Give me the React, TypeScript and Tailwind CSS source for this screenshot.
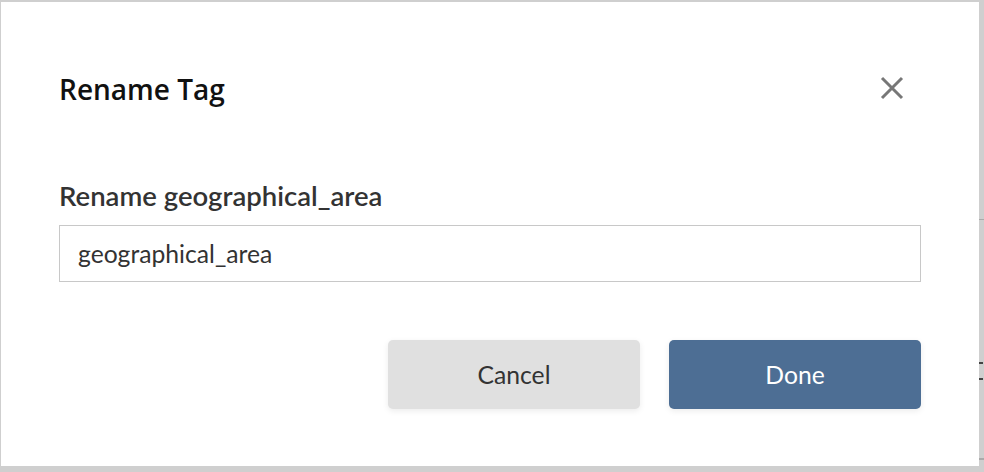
import React from "react";

function CloseIcon() {
  return (
    <svg width="24" height="24" viewBox="0 0 24 24" aria-hidden="true">
      <path d="M2 2 L22 22 M22 2 L2 22" stroke="#777777" strokeWidth="3" strokeLinecap="butt" />
    </svg>
  );
}

export default function App() {
  return (
    <div className="flex h-[472px] w-[984px] overflow-hidden bg-[#cfcfcf]">
      <div className="ml-px mt-[2px] flex h-[464px] w-[978px] flex-col bg-white px-[58px] pt-[71px] pb-[57px]">
        <div className="flex h-8 items-center justify-between">
          <h2
            className="text-[28px] font-semibold leading-8 text-[#111]"
            style={{ fontFamily: '"Open Sans", "Noto Sans", sans-serif' }}
          >
            Rename Tag
          </h2>
          <button className="mr-[17px] mt-[-2px] flex h-6 w-6 items-center justify-center" aria-label="Close">
            <CloseIcon />
          </button>
        </div>
        <label
          className="mt-[74px] block text-[27.5px] font-semibold leading-[34px] text-[#333]"
          style={{ fontFamily: '"Lato", "Liberation Sans", sans-serif' }}
        >
          Rename geographical_area
        </label>
        <div
          className="mt-3 flex h-[57px] items-center border border-[#c8c8c8] pl-[18px] text-[24.7px] text-[#333]"
          style={{ fontFamily: '"Lato", "Liberation Sans", sans-serif' }}
        >
          geographical_area
        </div>
        <div
          className="mt-[58px] flex justify-end gap-[29px]"
          style={{ fontFamily: '"Lato", "Liberation Sans", sans-serif' }}
        >
          <button className="h-[69px] w-[252px] rounded-[5px] bg-[#e0e0e0] text-[24.7px] text-[#333] shadow-[0_2px_6px_rgba(0,0,0,0.08)]">
            Cancel
          </button>
          <button className="h-[69px] w-[252px] rounded-[5px] bg-[#4d6e94] text-[24.7px] text-white shadow-[0_2px_6px_rgba(0,0,0,0.08)]">
            Done
          </button>
        </div>
      </div>
      <div className="flex w-[5px] flex-col">
        <div className="mt-[219px] h-px w-[5px] bg-[#aaaaaa]" />
        <div className="mt-[142px] h-[2px] w-[4px] bg-[#444]" />
        <div className="mt-[14px] h-[2px] w-[4px] bg-[#444]" />
        <div className="mt-[78px] h-[2px] w-[5px] bg-[#aaaaaa]" />
      </div>
    </div>
  );
}
